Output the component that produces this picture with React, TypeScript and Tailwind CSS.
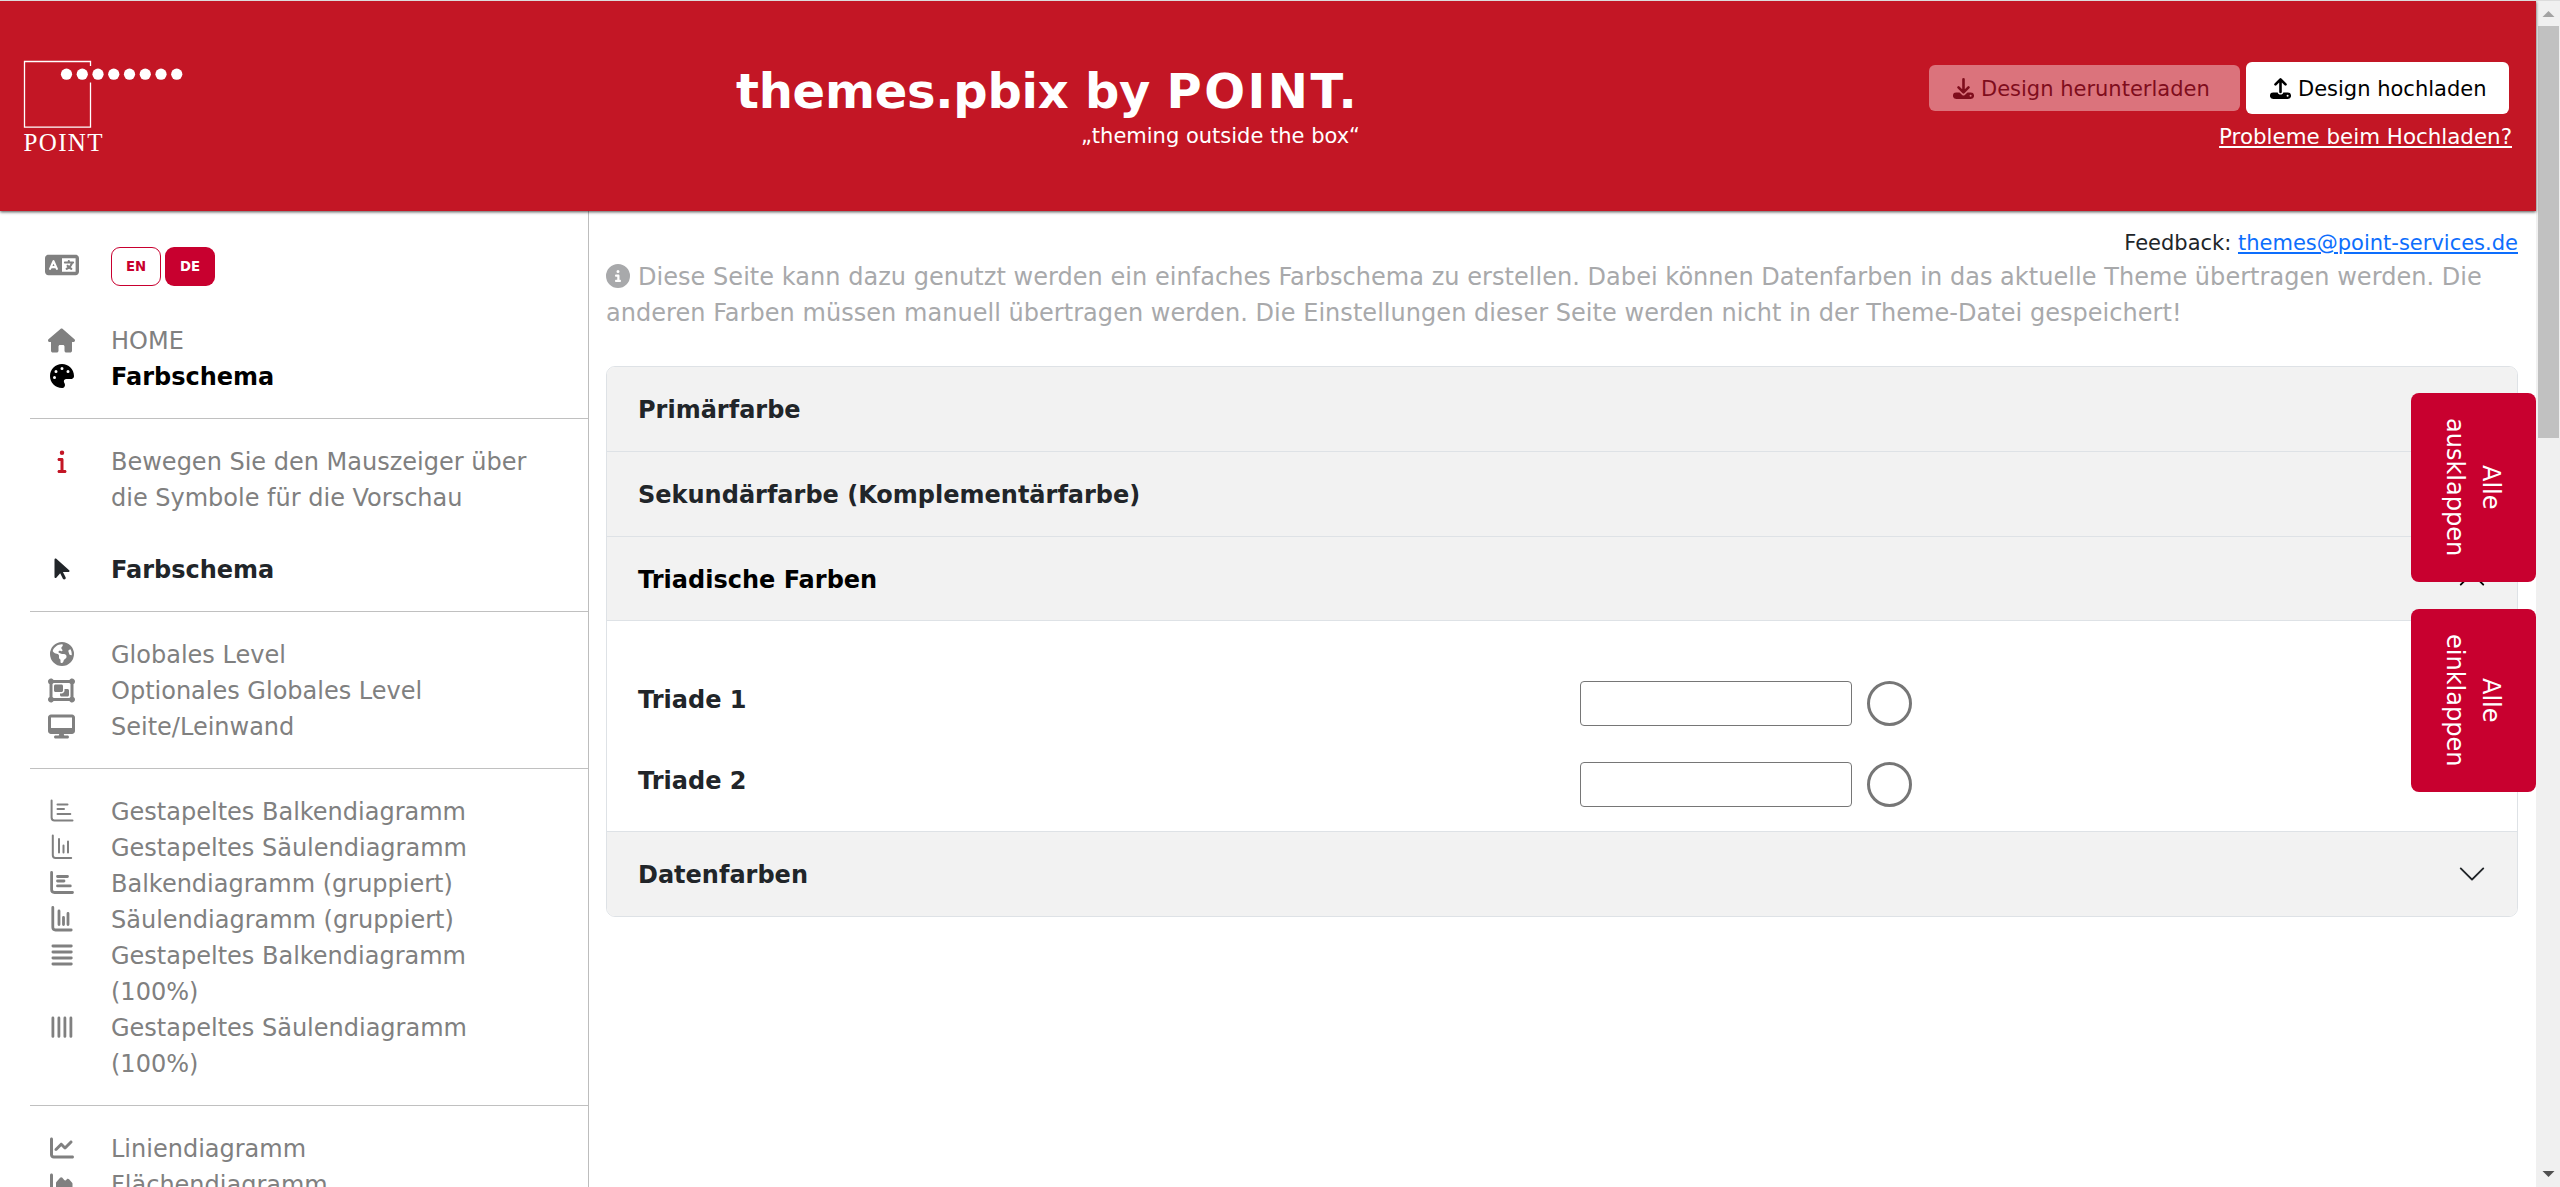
import React from "react";
import type { ReactNode } from "react";
import {
  FaLanguage, FaHouse, FaPalette, FaInfo, FaArrowPointer, FaEarthAmericas,
  FaObjectGroup, FaDesktop, FaChartLine, FaChartArea, FaCircleInfo,
} from "react-icons/fa6";

type IconProps = { className?: string };

function HorizontalBars({ heavy }: { heavy?: boolean }) {
  return (
    <svg width="24" height="24" viewBox="0 0 24 24" fill="none" stroke="currentColor" strokeWidth={heavy ? 2.8 : 2} strokeLinecap="round">
      <path d="M1.6 1.5v17.1q0 2.9 2.900 2.900H22.500" />
      <path d="M7.500 5.500h10M7.500 10h6.500M7.500 14.900h12.800" />
    </svg>
  );
}

function VerticalBars({ heavy }: { heavy?: boolean }) {
  return (
    <svg width="24" height="26" viewBox="0 0 24 26" fill="none" stroke="currentColor" strokeWidth={heavy ? 2.8 : 2} strokeLinecap="round">
      <path d="M2.8 1.5v19.8q0 2.7 2.700 2.700h15.700" />
      <path d="M9 5v13.500M13.500 11.500v7M18 7.500v11" />
    </svg>
  );
}

function FourLines({ vertical }: { vertical?: boolean }) {
  return (
    <svg width="22" height="24" viewBox="0 0 22 24" fill="none" stroke="currentColor" strokeWidth="2.8" strokeLinecap="round">
      {vertical ? (
        <path d="M1.900 3v18.400M7.900 3v18.400M13.900 3v18.400M19.900 3v18.400" />
      ) : (
        <path d="M1.900 3h18.400M1.900 9h18.400M1.900 15h18.400M1.900 21h18.400" />
      )}
    </svg>
  );
}

function Transfer({ up }: { up?: boolean }) {
  return (
    <svg width="21" height="21" viewBox="0 0 21 21" fill="none" stroke="currentColor" strokeWidth="2.600" strokeLinecap="round" strokeLinejoin="round" className="shrink-0">
      {up ? <path d="M10.500 14V1.800M5.500 6.400l5-5 5 5" /> : <path d="M10.500 1.300V14M5.500 9.400l5 5 5-5" />}
      <path
        fill="currentColor"
        stroke="none"
        fillRule="evenodd"
        d={
          up
            ? "M3.200 14.400h4.500c.3 1.300 1.400 2.200 2.800 2.200s2.500-.9 2.800-2.200h4.500a3.200 3.200 0 0 1 0 6.500H3.200a3.200 3.200 0 0 1 0-6.500zM17.600 16.700a1 1 0 1 0 0 2 1 1 0 0 0 0-2z"
            : "M3.200 14.400h3.300l2.700 2.500a2 2 0 0 0 2.600 0l2.700-2.500h3.300a3.200 3.200 0 0 1 0 6.500H3.200a3.200 3.200 0 0 1 0-6.500zM17.600 16.700a1 1 0 1 0 0 2 1 1 0 0 0 0-2z"
        }
      />
    </svg>
  );
}

function Logo() {
  return (
    <svg width="170" height="108" viewBox="0 0 170 108" fill="none" stroke="#fff">
      <path d="M71.500 14V9.500H5.500V75.200H71.500V30.500" strokeWidth="1.300" />
      <g fill="#fff" stroke="none">
        {[0, 1, 2, 3, 4, 5, 6, 7].map((i) => (
          <circle key={i} cx={47.500 + i * 15.750} cy="22.200" r="5.600" />
        ))}
        <text x="4.500" y="98.700" fontFamily="'Liberation Serif', serif" fontSize="25" textLength="79">POINT</text>
      </g>
    </svg>
  );
}

function Chevron({ className }: IconProps) {
  return (
    <svg width="30" height="30" viewBox="0 0 16 16" fill="currentColor" className={className}>
      <path fillRule="evenodd" d="M1.646 4.646a.5.5 0 0 1 .708 0L8 10.293l5.646-5.647a.5.5 0 0 1 .708.708l-6 6a.5.5 0 0 1-.708 0l-6-6a.5.5 0 0 1 0-.708z" />
    </svg>
  );
}

function NavRow({ icon, className = "text-[#808080]", children }: { icon: ReactNode; className?: string; children: ReactNode }) {
  return (
    <div className={`flex ${className}`}>
      <div className="ml-[25.500px] flex h-9 w-[72px] shrink-0 items-center justify-center">{icon}</div>
      <div className="ml-[13.500px] w-[425px] translate-y-px">{children}</div>
    </div>
  );
}

function Rule() {
  return <div className="my-6 ml-[30px] h-px bg-[#c0c0c0]" />;
}

function Sidebar() {
  return (
    <aside className="w-[589px] shrink-0 overflow-hidden border-r border-[#bdbdbd] pt-9">
      <div className="flex h-[39px] text-[#808080]">
        <div className="ml-[26px] flex w-[72px] justify-center pt-1"><FaLanguage size={34} className="-mt-[3px]" /></div>
        <div className="ml-[13px] flex gap-1">
          <button className="h-[39px] w-[50px] rounded-[9px] border border-[#c8002f] bg-white text-[13.300px] font-bold text-[#c8002f]">EN</button>
          <button className="h-[39px] w-[50px] rounded-[9px] bg-[#c8002f] text-[13.300px] font-bold text-white">DE</button>
        </div>
      </div>
      <div className="h-9" />
      <NavRow icon={<FaHouse size={27} />}>HOME</NavRow>
      <NavRow icon={<FaPalette size={24} />} className="font-bold text-black">Farbschema</NavRow>
      <Rule />
      <NavRow icon={<FaInfo size={24} className="text-[#c31625]" />}>Bewegen Sie den Mauszeiger über die Symbole für die Vorschau</NavRow>
      <div className="h-9" />
      <NavRow icon={<FaArrowPointer size={24} />} className="font-bold text-[#212529]">Farbschema</NavRow>
      <Rule />
      <NavRow icon={<FaEarthAmericas size={24} />}>Globales Level</NavRow>
      <NavRow icon={<FaObjectGroup size={27} />}>Optionales Globales Level</NavRow>
      <NavRow icon={<FaDesktop size={27} />}>Seite/Leinwand</NavRow>
      <Rule />
      <NavRow icon={<HorizontalBars />}>Gestapeltes Balkendiagramm</NavRow>
      <NavRow icon={<VerticalBars />}>Gestapeltes Säulendiagramm</NavRow>
      <NavRow icon={<HorizontalBars heavy />}>Balkendiagramm (gruppiert)</NavRow>
      <NavRow icon={<VerticalBars heavy />}>Säulendiagramm (gruppiert)</NavRow>
      <NavRow icon={<FourLines />}>Gestapeltes Balkendiagramm (100%)</NavRow>
      <NavRow icon={<FourLines vertical />}>Gestapeltes Säulendiagramm (100%)</NavRow>
      <Rule />
      <NavRow icon={<FaChartLine size={24} />}>Liniendiagramm</NavRow>
      <NavRow icon={<FaChartArea size={24} />}>Flächendiagramm</NavRow>
    </aside>
  );
}

function PanelHeader({ title, open, className = "h-[85px]" }: { title: string; open?: boolean; className?: string }) {
  return (
    <div className={`flex items-center justify-between bg-[#f2f2f2] pl-[31px] pr-[30px] font-bold ${className} ${open ? "text-black" : ""}`}>
      <span className="translate-y-px">{title}</span>
      <Chevron className={open ? "rotate-180" : ""} />
    </div>
  );
}

function TriadRow({ label }: { label: string }) {
  return (
    <div className="flex h-[45px]">
      <div className="mt-px w-[973px] pl-[31px] font-bold">{label}</div>
      <input className="h-[45px] w-[272px] rounded-[4px] border border-[#767676] bg-white" />
      <div className="ml-[15px] size-[45px] rounded-full border-[3px] border-[#767676]" />
    </div>
  );
}

function Header() {
  return (
    <header className="relative z-10 flex h-[210px] shrink-0 bg-[#c31625] text-white shadow-[0_1px_3px_rgba(0,0,0,0.7)]">
      <div className="w-[736px] pl-[19px] pt-[51px]"><Logo /></div>
      <div className="flex w-[624px] flex-col pt-[61px]">
        <h1 className="whitespace-nowrap text-[48px] font-bold leading-[58px] tracking-[-0.25px]">themes.pbix by <span className="tracking-[2.5px]">POINT.</span></h1>
        <p className="self-end whitespace-nowrap text-[21px] leading-8">„theming outside the box“</p>
      </div>
      <div className="ml-auto flex flex-col pr-6 pt-[61px]">
        <div className="flex items-center gap-1.5 pr-[3px] text-[21px]">
          <button className="flex h-[46px] w-[311px] items-center gap-[7px] rounded-md bg-white/40 pl-6 text-[#7f0d1c]"><Transfer /><span className="translate-y-px">Design herunterladen</span></button>
          <button className="flex h-[52px] w-[263px] items-center gap-[7px] rounded-md bg-white pl-6 text-black"><Transfer up /><span className="translate-y-px">Design hochladen</span></button>
        </div>
        <a className="mt-[7px] self-end text-[21.400px] leading-8 underline">Probleme beim Hochladen?</a>
      </div>
    </header>
  );
}

function SideButton({ verb, className }: { verb: string; className: string }) {
  return (
    <button className={`flex w-[125px] items-center justify-center rounded-lg bg-[#c8002f] text-white [writing-mode:vertical-rl] ${className}`}>
      <span className="-translate-x-px text-center leading-9">Alle<br />{verb}</span>
    </button>
  );
}

function ScrollBar() {
  return (
    <div className="flex w-6 shrink-0 flex-col items-center bg-[#f0f0f0]">
      <svg width="24" height="25" viewBox="0 0 24 25" fill="#a3a3a3"><path d="M6.500 16h12L12.500 10z" /></svg>
      <div className="h-[412px] w-[21px] bg-[#c1c1c1]" />
      <svg width="24" height="25" viewBox="0 0 24 25" fill="#505050" className="mt-auto"><path d="M6.500 9h12l-6 6z" /></svg>
    </div>
  );
}

export default function App() {
  return (
    <div className="flex h-[1187px] w-[2560px] overflow-hidden border-t border-[#dcdcdc] bg-white font-['Verdana','DejaVu_Sans',sans-serif] text-[24px] leading-9 text-[#212529]">
      <div className="relative flex min-w-0 grow flex-col">
        <Header />
        <div className="flex min-h-0 grow">
          <Sidebar />
          <main className="min-w-0 grow pl-[17px] pr-[18px] pt-[16px]">
            <div className="text-right text-[21px] leading-8">Feedback: <a className="text-[#0d6efd] underline">themes@point-services.de</a></div>
            <p className="tracking-[0.04px] text-[#a8a9ab]">
              <FaCircleInfo className="mr-2 inline size-6 -translate-y-0.5" />
              Diese Seite kann dazu genutzt werden ein einfaches Farbschema zu erstellen. Dabei können Datenfarben in das aktuelle Theme übertragen werden. Die anderen Farben müssen manuell übertragen werden. Die Einstellungen dieser Seite werden nicht in der Theme-Datei gespeichert!
            </p>
            <section className="mt-[35px] divide-y divide-[#dee2e6] overflow-hidden rounded-[9px] border border-[#dee2e6]">
              <PanelHeader title="Primärfarbe" />
              <PanelHeader title="Sekundärfarbe (Komplementärfarbe)" />
              <PanelHeader title="Triadische Farben" open className="h-[84px]" />
              <div className="flex h-[211px] flex-col gap-9 pt-[60px]">
                <TriadRow label="Triade 1" />
                <TriadRow label="Triade 2" />
              </div>
              <PanelHeader title="Datenfarben" className="h-[84px]" />
            </section>
          </main>
        </div>
        <div className="absolute right-0 top-[392px] flex flex-col gap-[27px]">
          <SideButton verb="ausklappen" className="h-[189px]" />
          <SideButton verb="einklappen" className="h-[183px]" />
        </div>
      </div>
      <ScrollBar />
    </div>
  );
}
